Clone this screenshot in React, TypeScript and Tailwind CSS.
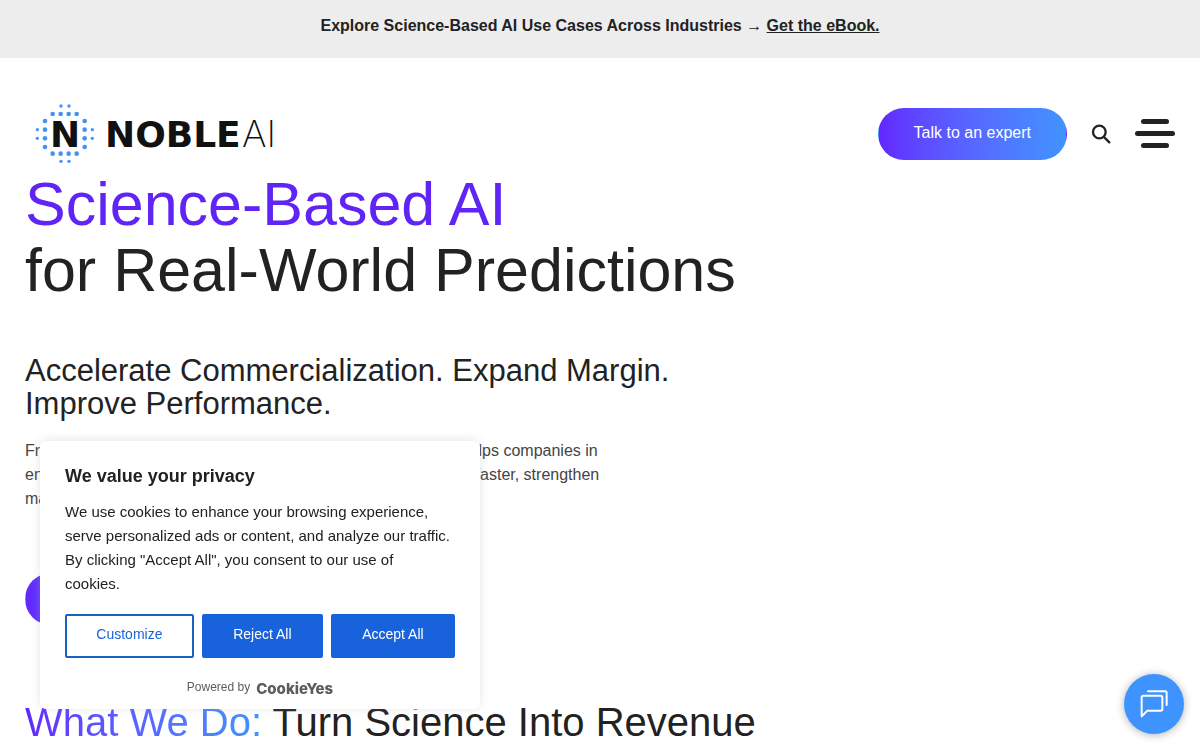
const dots = [
  [123, 48, 5], [147, 48, 5],
  [98, 72, 7], [122, 72, 7], [146, 72, 7], [170, 72, 7],
  [75, 93, 7], [194, 93, 7],
  [52, 119, 5], [75, 119, 7], [194, 119, 7], [217, 119, 5],
  [52, 145, 5], [75, 145, 7], [194, 145, 7], [217, 145, 5],
  [75, 171, 7], [194, 171, 7],
  [98, 191, 7], [122, 191, 7], [146, 191, 7], [170, 191, 7],
  [123, 214, 5], [147, 214, 5],
];

const Logo = () => {
  return (
    <a href="#" aria-label="NobleAI" className="block pl-2">
      <svg viewBox="39 39 747 183" className="h-[61px] w-[249px]">
        {dots.map(([x, y, r]) => (
          <circle key={`${x}-${y}`} cx={x} cy={y} r={r} fill="#4592f5" />
        ))}
        <g
          fill="#111111"
          fontSize="108"
          fontWeight="700"
          fontFamily="DejaVu Sans, sans-serif"
        >
          <text x="135" y="171" textAnchor="middle">
            N
          </text>
          <text x="255" y="171">NOBLE</text>
          <text
            x="666"
            y="171"
            fontSize="112"
            fontFamily="Inter, sans-serif"
            fontWeight="200"
          >
            AI
          </text>
        </g>
      </svg>
    </a>
  );
};

const Banner = () => {
  return (
    <div className="bg-[#ededed] px-6 pt-3.5 pb-5 text-center font-bold leading-6">
      Explore Science-Based AI Use Cases Across Industries →{" "}
      <a href="#" className="underline">
        Get the eBook.
      </a>
    </div>
  );
};

const Header = () => {
  return (
    <header className="flex items-center justify-between pt-[45px]">
      <Logo />
      <div className="flex items-center gap-6">
        <a
          href="#"
          className="rounded-full border border-transparent bg-linear-to-r from-[#6226ff] to-[#3f93ff] px-[35px] pt-[11px] pb-[13px] text-white leading-[26px]"
        >
          Talk to an expert
        </a>
        <button aria-label="Search">
          <svg
            viewBox="694 98 60 66"
            className="h-[22px] w-5"
            fill="none"
            stroke="#222222"
            strokeWidth="7"
            strokeLinecap="round"
          >
            <circle cx="719" cy="125" r="19" />
            <path d="M734 141L749 156" />
          </svg>
        </button>
        <button aria-label="Menu" className="flex flex-col items-center gap-[7px]">
          <span className="h-[5px] w-7 rounded-full bg-[#222222]" />
          <span className="h-[5px] w-10 rounded-full bg-[#222222]" />
          <span className="h-[5px] w-7 rounded-full bg-[#222222]" />
        </button>
      </div>
    </header>
  );
};

const CookieNotice = () => {
  return (
    <section
      aria-label="We value your privacy"
      className="fixed bottom-[41px] left-10 w-[440px] max-w-full rounded-md bg-white px-[25px] pt-[23px] text-[#212121] shadow-[0_-1px_10px_rgba(172,171,171,0.3)]"
    >
      <h3 className="text-lg font-bold leading-6">We value your privacy</h3>
      <p className="mt-3 text-[15px] leading-6">
        We use cookies to enhance your browsing experience, serve personalized
        ads or content, and analyze our traffic. By clicking "Accept All", you
        consent to our use of
        <br />
        cookies.
      </p>
      <div className="mt-[18px] flex gap-2 text-sm">
        <button className="h-11 flex-auto rounded-xs border-2 border-[#1863bf] px-2 pb-1 text-[#1863dc]">
          Customize
        </button>
        <button className="h-11 flex-auto rounded-xs border-2 border-[#1863dc] bg-[#1863dc] px-2 pb-1 text-white">
          Reject All
        </button>
        <button className="h-11 flex-auto rounded-xs border-2 border-[#1863dc] bg-[#1863dc] px-2 pb-1 text-white">
          Accept All
        </button>
      </div>
      <div className="flex items-center justify-center gap-1.5 pt-[19px] pb-3 text-xs leading-5 text-[#5c5c5c]">
        Powered by
        <a
          href="#"
          className="pt-1 font-[Inter,sans-serif] text-[15px] font-extrabold leading-4"
        >
          CookieYes
        </a>
      </div>
    </section>
  );
};

const ChatButton = () => {
  return (
    <button
      aria-label="Open chat"
      className="fixed right-4 bottom-4 flex size-[60px] items-center justify-center rounded-full bg-[#3f93ff] shadow-[0_1px_8px_rgba(0,0,0,0.3)]"
    >
      <svg
        viewBox="118 85 90 90"
        className="size-[30px]"
        fill="none"
        stroke="white"
        strokeWidth="6"
        strokeLinecap="round"
        strokeLinejoin="round"
      >
        <path d="M126 167V110q0-5 5-5H183q5 0 5 5V145q0 5-5 5H143Z" />
        <path d="M145 92H196q5 0 5 5V133" />
      </svg>
    </button>
  );
};

export default function App() {
  return (
    <div className="bg-white font-['Liberation_Sans',Arial,sans-serif] text-base text-[#222222]">
      <Banner />
      <div className="px-[25px]">
        <Header />
        <main className="pt-[7px]">
          <h1 className="text-[61px] leading-[66px]">
            <span className="text-[#6025f5]">Science-Based AI</span>
            <br />
            for Real-World Predictions
          </h1>
          <h2 className="mt-[51px] max-w-[660px] text-[31px] leading-[33px]">
            Accelerate Commercialization. Expand Margin. Improve Performance.
          </h2>
          <p className="mt-[19px] text-[#444444] leading-6">
            From discovery to production, our Science-Based AI platform helps
            companies in
            <br />
            energy, chemicals and specialty materials launch new products
            faster, strengthen
            <br />
            margins.
          </p>
          <a
            href="#"
            className="mt-[62px] inline-block rounded-full border border-transparent bg-linear-to-r from-[#6226ff] to-[#3f93ff] px-[35px] py-3 text-white leading-[26px]"
          >
            Talk to an expert
          </a>
          <h2 className="mt-[74px] text-[40px] leading-[46px]">
            <span className="bg-linear-to-r from-[#6226ff] to-[#3f93ff] bg-clip-text text-transparent">
              What We Do:
            </span>{" "}
            Turn Science Into Revenue
          </h2>
        </main>
      </div>
      <CookieNotice />
      <ChatButton />
    </div>
  );
}
